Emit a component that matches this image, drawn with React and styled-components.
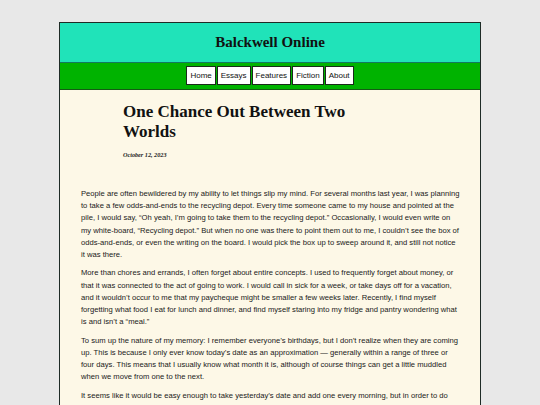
import React from 'react'
import styled, { createGlobalStyle } from 'styled-components'

const GlobalStyle = createGlobalStyle`
  body {
    margin: 0;
    background: #e8e8e8;
  }
`

const Page = () => (
  <>
    <GlobalStyle />
    <Wrapper>
      <Header>
        <SiteTitle>Balckwell Online</SiteTitle>
      </Header>
      <Nav>
        <NavButton>Home</NavButton>
        <NavButton>Essays</NavButton>
        <NavButton>Features</NavButton>
        <NavButton>Fiction</NavButton>
        <NavButton>About</NavButton>
      </Nav>
      <Content>
        <TitleBlock>
          <Title>One Chance Out Between Two Worlds</Title>
          <PostDate>October 12, 2023</PostDate>
        </TitleBlock>
        <Body>
          <p>
            People are often bewildered by my ability to let things slip my mind. For several months last year, I was planning
            to take a few odds-and-ends to the recycling depot. Every time someone came to my house and pointed at the
            pile, I would say, “Oh yeah, I’m going to take them to the recycling depot.” Occasionally, I would even write on
            my white-board, “Recycling depot.” But when no one was there to point them out to me, I couldn’t see the box of
            odds-and-ends, or even the writing on the board. I would pick the box up to sweep around it, and still not notice
            it was there.
          </p>
          <p>
            More than chores and errands, I often forget about entire concepts. I used to frequently forget about money, or
            that it was connected to the act of going to work. I would call in sick for a week, or take days off for a vacation,
            and it wouldn’t occur to me that my paycheque might be smaller a few weeks later. Recently, I find myself
            forgetting what food I eat for lunch and dinner, and find myself staring into my fridge and pantry wondering what
            is and isn’t a “meal.”
          </p>
          <p>
            To sum up the nature of my memory: I remember everyone’s birthdays, but I don’t realize when they are coming
            up. This is because I only ever know today’s date as an approximation — generally within a range of three or
            four days. This means that I usually know what month it is, although of course things can get a little muddled
            when we move from one to the next.
          </p>
          <p>
            It seems like it would be easy enough to take yesterday’s date and add one every morning, but in order to do
            that I would have to remember yesterday’s date in the first place.
          </p>
        </Body>
      </Content>
    </Wrapper>
  </>
)

const Wrapper = styled.div`
  width: 420px;
  margin: 22px auto 0;
  border: 1px solid #1e2b26;
  border-bottom: none;
`

const Header = styled.header`
  height: 39px;
  background: #20e3b9;
  border-bottom: 1px solid #127a5e;
  display: flex;
  align-items: center;
  justify-content: center;
`

const SiteTitle = styled.h1`
  margin: 0;
  font-family: 'Liberation Serif', serif;
  font-weight: bold;
  font-size: 15px;
  color: #111;
`

const Nav = styled.nav`
  background: #00b300;
  border-bottom: 1px solid #145c14;
  display: flex;
  justify-content: center;
  padding: 3px 0 4px;
`

const NavButton = styled.div`
  background: #fff;
  border: 1px solid #1b2a1b;
  height: 17px;
  padding: 0 3px;
  display: flex;
  align-items: center;
  font-family: 'Liberation Sans', Arial, sans-serif;
  font-size: 8px;
  color: #111;
  & + & {
    margin-left: 1px;
  }
`

const Content = styled.main`
  background: #fdf8e7;
  padding: 12px 18.5px 0 21px;
  height: 320px;
  overflow: hidden;
`

const TitleBlock = styled.div`
  padding: 0 42px;
`

const Title = styled.h2`
  margin: 0;
  max-width: 250px;
  font-family: 'Liberation Serif', serif;
  font-weight: bold;
  font-size: 17px;
  line-height: 20px;
  color: #111;
`

const PostDate = styled.div`
  margin-top: 9px;
  font-family: 'Liberation Serif', serif;
  font-weight: bold;
  font-style: italic;
  font-size: 6.2px;
  line-height: 8px;
  color: #222;
`

const Body = styled.div`
  margin-top: 29px;
  font-family: 'Liberation Sans', Arial, sans-serif;
  font-size: 7.65px;
  line-height: 12.2px;
  color: #1a1a1a;

  p {
    margin: 0 0 6.2px;
  }
`

export default Page
